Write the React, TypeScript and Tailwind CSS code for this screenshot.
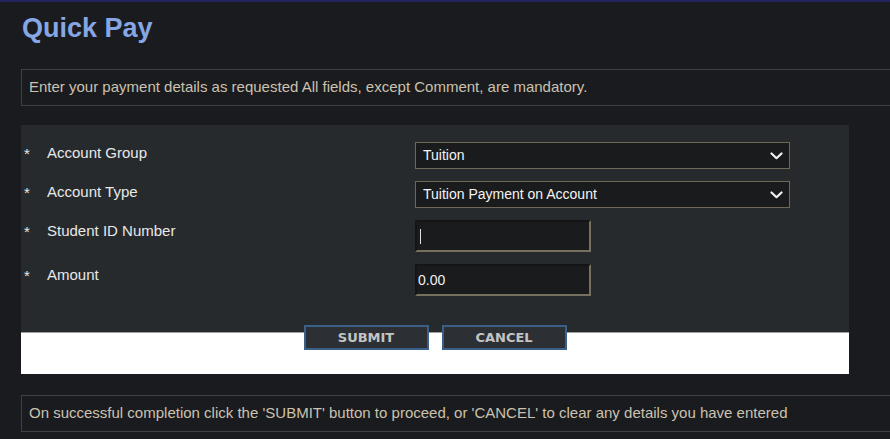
import React from "react";

const Chevron = () => (
  <svg width="13" height="8" viewBox="0 0 13 8" className="absolute right-[6px] top-1/2 -translate-y-1/2">
    <path d="M1.5 1.5 L6.5 6.2 L11.5 1.5" fill="none" stroke="#f2f2f2" strokeWidth="2.2" strokeLinecap="round" strokeLinejoin="round" />
  </svg>
);

const SelectBox = ({ value }: { value: string }) => (
  <div className="relative h-[27px] w-[375px] border border-[#6f6858] bg-[#1a1b1d] pl-[7px] flex items-center text-[14px] text-[#f4f4f4]">
    {value}
    <Chevron />
  </div>
);

const InputBox = ({ children }: { children?: React.ReactNode }) => (
  <div className="h-[32px] w-[176px] border-2 border-t-[#151515] border-l-[#151515] border-b-[#76705f] border-r-[#76705f] bg-[#1a1b1d] flex items-center pl-[1px] text-[14px] text-[#f0f0f0]">
    {children}
  </div>
);

const Row = ({ label, children }: { label: string; children: React.ReactNode }) => (
  <div className="flex items-start">
    <div className="w-[26px] pl-[3px] pt-[3px] text-[15px] leading-[17px] text-[#e8e8e8]">*</div>
    <div className="w-[368px] pt-[2px] text-[15px] leading-[17px] text-[#e8e8e8]">{label}</div>
    {children}
  </div>
);

export default function App() {
  return (
    <div className="w-full h-[439px] overflow-hidden bg-[#1a1b1e] border-t-2 border-[#23235e]" style={{ fontFamily: '"Liberation Sans", Arial, sans-serif' }}>
      <h1 className="ml-[22px] mt-[10px] text-[27px] leading-[32px] font-bold text-[#86a6e4]">Quick Pay</h1>
      <div className="ml-[21px] mt-[25px] w-[900px] h-[37px] border border-[#404040] flex items-center pl-[7px] text-[15px] text-[#cbc2b0]">
        Enter your payment details as requested All fields, except Comment, are mandatory.
      </div>
      <div className="ml-[21px] mt-[19px] w-[828px]">
        <div className="bg-[#272a2d] pt-[17px] pb-[36px] flex flex-col gap-[12px]">
          <Row label="Account Group"><SelectBox value="Tuition" /></Row>
          <Row label="Account Type"><SelectBox value="Tuition Payment on Account" /></Row>
          <Row label="Student ID Number">
            <InputBox><span className="ml-[2px] inline-block w-px h-[15px] bg-[#e0e0e0]" /></InputBox>
          </Row>
          <Row label="Amount"><InputBox>0.00</InputBox></Row>
        </div>
        <div className="h-[42px] bg-white border-t border-[#a0a0a0] flex justify-center gap-[13px]">
          <button className="-mt-[8px] h-[25px] w-[125px] bg-[#2c3035] border-2 border-[#3b6087] text-[13px] font-bold text-[#c4c4c4]" style={{ fontFamily: '"DejaVu Sans", Verdana, sans-serif' }}>SUBMIT</button>
          <button className="-mt-[8px] h-[25px] w-[125px] bg-[#2c3035] border-2 border-[#3b6087] text-[13px] font-bold text-[#c4c4c4]" style={{ fontFamily: '"DejaVu Sans", Verdana, sans-serif' }}>CANCEL</button>
        </div>
      </div>
      <div className="ml-[21px] mt-[21px] w-[900px] h-[37px] border border-[#404040] flex items-center pl-[7px] text-[15px] text-[#cbc2b0]">
        On successful completion click the 'SUBMIT' button to proceed, or 'CANCEL' to clear any details you have entered
      </div>
    </div>
  );
}
